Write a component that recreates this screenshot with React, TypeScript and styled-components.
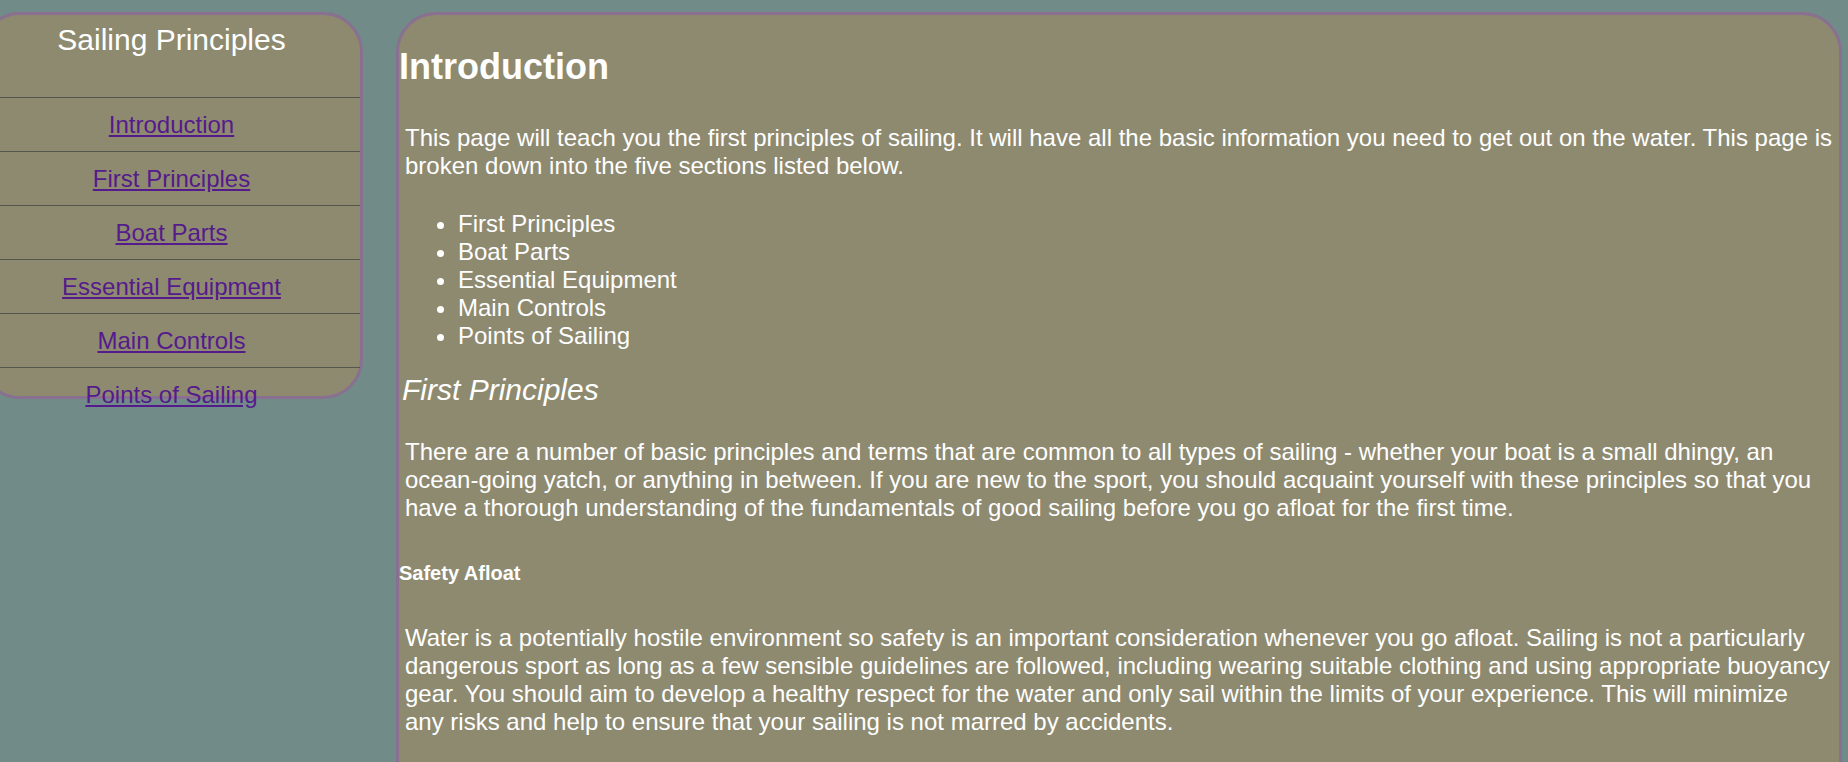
import React from "react";
import styled, { createGlobalStyle } from "styled-components";

const GlobalStyle = createGlobalStyle`
  html, body {
    margin: 0;
    padding: 0;
    height: 100%;
    overflow: hidden;
  }
  body {
    background: #718b88;
    color: #ffffff;
    font-family: "Liberation Sans", Arial, Helvetica, sans-serif;
  }
`;

const Page = styled.div`
  display: flex;
  align-items: flex-start;
  padding: 12px 6px 0 0;
`;

const Sidebar = styled.nav`
  box-sizing: border-box;
  flex: 0 0 383px;
  height: 387px;
  margin-left: -20px;
  background: #8e8a70;
  border: 3px solid #8a7090;
  border-radius: 40px;
  text-align: center;
`;

const SidebarTitle = styled.div`
  margin: 8px 0 0;
  font-size: 30px;
  line-height: 34px;
  font-weight: normal;
`;

const NavList = styled.ul`
  list-style: none;
  margin: 40px 0 0;
  padding: 0;
`;

const NavItem = styled.li`
  border-top: 1px solid #55574f;
  padding: 12.5px 0;
  font-size: 24px;
  line-height: 28px;
`;

const NavLink = styled.a`
  color: #551a8b;
  text-decoration: underline;
`;

const Content = styled.main`
  box-sizing: border-box;
  flex: 1 1 auto;
  min-width: 0;
  min-height: 900px;
  margin-left: 33px;
  background: #8e8a70;
  border: 3px solid #8a7090;
  border-radius: 40px;
`;

const PageTitle = styled.h1`
  margin: 31px 0 0;
  font-size: 36px;
  font-weight: bold;
  line-height: normal;
`;

const SectionTitle = styled.h2`
  margin: 23px 0 0;
  padding-left: 3px;
  font-size: 30px;
  font-style: italic;
  font-weight: normal;
  line-height: normal;
`;

const SubTitle = styled.h3`
  margin: 40px 0 0;
  font-size: 20px;
  font-weight: bold;
  line-height: normal;
`;

const Paragraph = styled.p<{ $gap: number }>`
  margin: ${(p) => p.$gap}px 6px 0;
  font-size: 24px;
  line-height: normal;
`;

const SectionList = styled.ul`
  margin: 30px 0 0;
  padding-left: 59px;
  font-size: 24px;
  line-height: normal;
  list-style: disc;
`;

const sections = [
  "First Principles",
  "Boat Parts",
  "Essential Equipment",
  "Main Controls",
  "Points of Sailing",
];

export default function App() {
  return (
    <>
      <GlobalStyle />
      <Page>
        <Sidebar>
          <SidebarTitle>Sailing Principles</SidebarTitle>
          <NavList>
            {["Introduction", ...sections].map((s) => (
              <NavItem key={s}>
                <NavLink href={`#${s.toLowerCase().replace(/ /g, "-")}`}>{s}</NavLink>
              </NavItem>
            ))}
          </NavList>
        </Sidebar>
        <Content>
          <PageTitle>Introduction</PageTitle>
          <Paragraph $gap={36}>
            This page will teach you the first principles of sailing. It will have all the basic
            information you need to get out on the water. This page is broken down into the five
            sections listed below.
          </Paragraph>
          <SectionList>
            {sections.map((s) => (
              <li key={s}>{s}</li>
            ))}
          </SectionList>
          <SectionTitle>First Principles</SectionTitle>
          <Paragraph $gap={31}>
            There are a number of basic principles and terms that are common to all types of
            sailing - whether your boat is a small dhingy, an ocean-going yatch, or anything in
            between. If you are new to the sport, you should acquaint yourself with these
            principles so that you have a thorough understanding of the fundamentals of good
            sailing before you go afloat for the first time.
          </Paragraph>
          <SubTitle>Safety Afloat</SubTitle>
          <Paragraph $gap={39}>
            Water is a potentially hostile environment so safety is an important consideration
            whenever you go afloat. Sailing is not a particularly dangerous sport as long as a few
            sensible guidelines are followed, including wearing suitable clothing and using
            appropriate buoyancy gear. You should aim to develop a healthy respect for the water
            and only sail within the limits of your experience. This will minimize any risks and
            help to ensure that your sailing is not marred by accidents.
          </Paragraph>
        </Content>
      </Page>
    </>
  );
}
